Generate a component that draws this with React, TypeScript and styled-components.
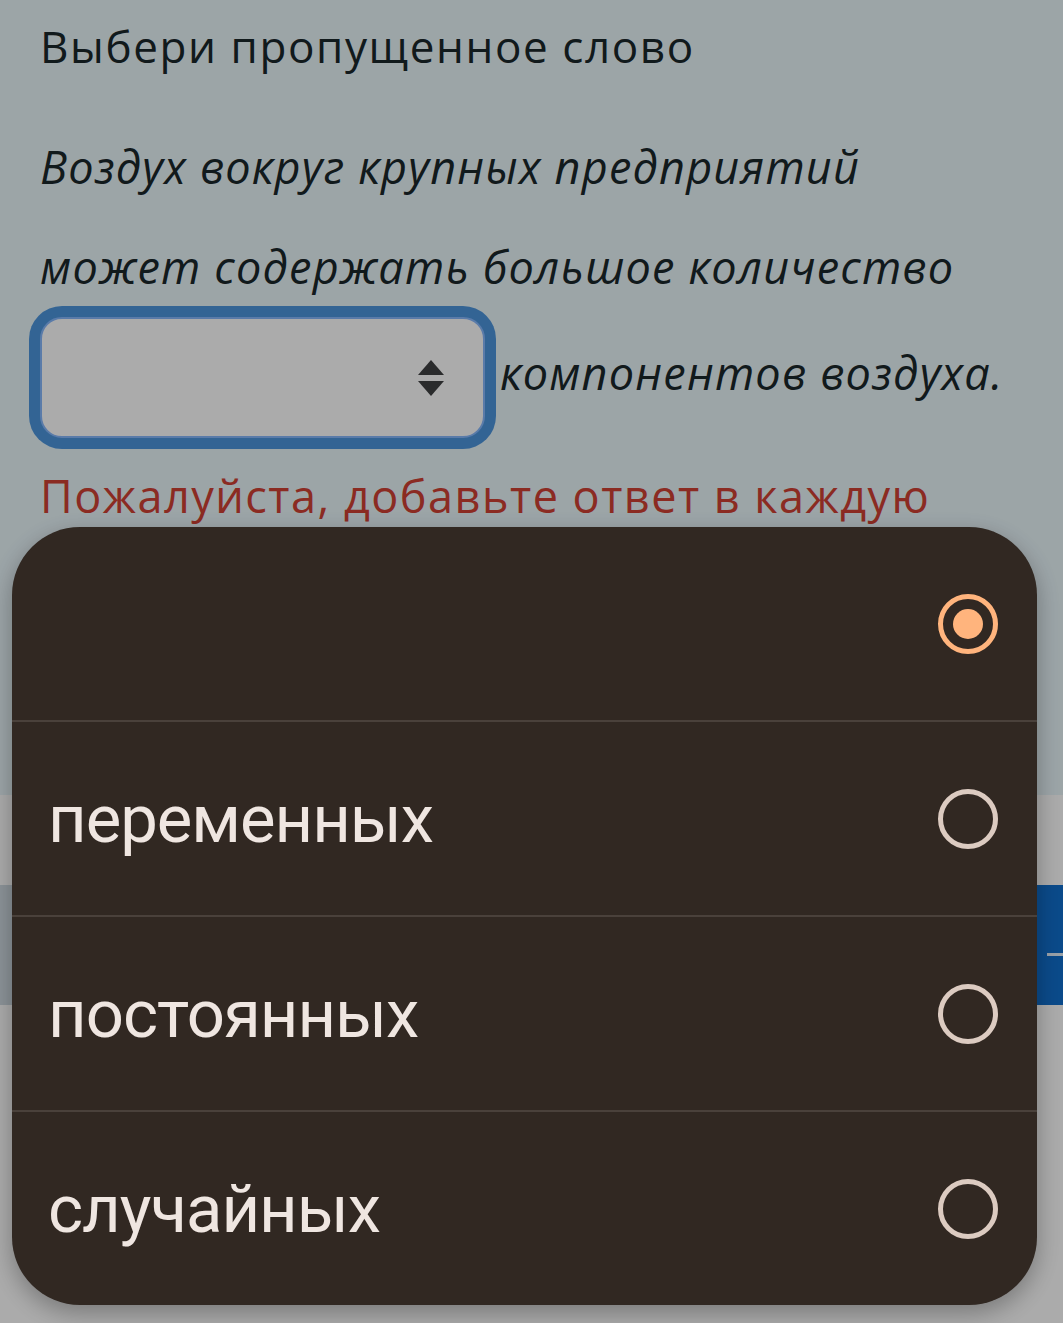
import * as React from "react";
import styled, { createGlobalStyle } from "styled-components";

const GlobalStyle = createGlobalStyle`
  html, body {
    margin: 0;
    padding: 0;
    overflow: hidden;
  }
  body {
    font-family: "Open Sans", "Liberation Sans", sans-serif;
  }
`;

const options = ["", "переменных", "постоянных", "случайных"];

const SelectArrows = () => (
  <svg width="28" height="36" viewBox="0 0 28 36">
    <path d="M14 0 L27 15 L1 15 Z" fill="#3f4042" />
    <path d="M14 36 L27 21 L1 21 Z" fill="#3f4042" />
  </svg>
);

export default function App() {
  const [selected, setSelected] = React.useState(0);
  return (
    <>
      <GlobalStyle />
      <Page>
        <Content>
          <Heading>Выбери пропущенное слово</Heading>
          <Sentence>
            Воздух вокруг крупных предприятий может содержать большое
            количество{" "}
            <SelectBox>
              <SelectArrows />
            </SelectBox>{" "}
            компонентов воздуха.
          </Sentence>
          <ErrorText>Пожалуйста, добавьте ответ в каждую строку.</ErrorText>
        </Content>
        <Footer>
          <ButtonRow>
            <GhostButton />
            <PrimaryButton>
              <Dash />
            </PrimaryButton>
          </ButtonRow>
        </Footer>
      </Page>
      <Scrim>
        <Sheet>
          {options.map((label, i) => (
            <OptionRow key={i} onClick={() => setSelected(i)}>
              <OptionLabel>{label}</OptionLabel>
              <Radio checked={selected === i} />
            </OptionRow>
          ))}
        </Sheet>
      </Scrim>
    </>
  );
}

const Page = styled.div`
  min-height: 100vh;
  display: flex;
  flex-direction: column;
  background: #e9f6fa;
`;

const Content = styled.div`
  padding: 18px 40px 0;
`;

const Heading = styled.h1`
  margin: 0;
  font-size: 44px;
  line-height: 56px;
  font-weight: 400;
  letter-spacing: 1.6px;
  color: #1a272b;
`;

const Sentence = styled.p`
  margin: 43px 0 0;
  font-size: 45px;
  line-height: 100px;
  font-style: italic;
  letter-spacing: 1.2px;
  color: #1a272b;
`;

const SelectBox = styled.span`
  display: inline-flex;
  align-items: center;
  justify-content: flex-end;
  box-sizing: border-box;
  width: 445px;
  height: 121px;
  padding-right: 38px;
  margin-right: 2px;
  vertical-align: middle;
  background: #ffffff;
  border: 2px solid #86b8fd;
  border-radius: 22px;
  box-shadow: 0 0 0 11px #4d96dd;
`;

const ErrorText = styled.p`
  margin: 30px 0 0;
  font-size: 45px;
  line-height: 56px;
  letter-spacing: 1.5px;
  color: #cf4033;
`;

const Footer = styled.div`
  margin-top: auto;
  height: 528px;
  box-sizing: border-box;
  padding-top: 90px;
  background: #ffffff;
`;

const ButtonRow = styled.div`
  display: grid;
  grid-template-columns: 1fr 1fr;
  gap: 16px;
  height: 120px;
`;

const GhostButton = styled.div`
  background: #d0dbe3;
`;

const PrimaryButton = styled.div`
  display: flex;
  align-items: center;
  justify-content: flex-end;
  padding-top: 18px;
  box-sizing: border-box;
  background: #106fce;
`;

const Dash = styled.span`
  width: 16px;
  height: 3px;
  background: #e6f0fa;
`;

const Scrim = styled.div`
  position: fixed;
  inset: 0;
  display: flex;
  align-items: flex-end;
  padding: 0 0 18px 12px;
  background: rgba(0, 0, 0, 0.33);
`;

const Sheet = styled.div`
  width: 1025px;
  display: flex;
  flex-direction: column;
  background: #312822;
  border-radius: 68px;
  overflow: hidden;
  box-shadow: 0 8px 24px rgba(0, 0, 0, 0.3);
`;

const OptionRow = styled.div`
  display: flex;
  align-items: center;
  justify-content: space-between;
  height: 193px;
  padding: 0 39px 0 36px;
  & + & {
    border-top: 2px solid #4a413b;
  }
`;

const OptionLabel = styled.span`
  font-family: Roboto, "Noto Sans", sans-serif;
  font-size: 67px;
  letter-spacing: -1px;
  color: #efe6e1;
`;

const Radio = styled.span<{ checked: boolean }>`
  position: relative;
  flex: none;
  width: 60px;
  height: 60px;
  box-sizing: border-box;
  border-radius: 50%;
  border: 5px solid ${(p) => (p.checked ? "#ffb47d" : "#dccbc1")};
  &::after {
    content: "";
    position: absolute;
    inset: 10px;
    border-radius: 50%;
    background: #ffb47d;
    display: ${(p) => (p.checked ? "block" : "none")};
  }
`;
